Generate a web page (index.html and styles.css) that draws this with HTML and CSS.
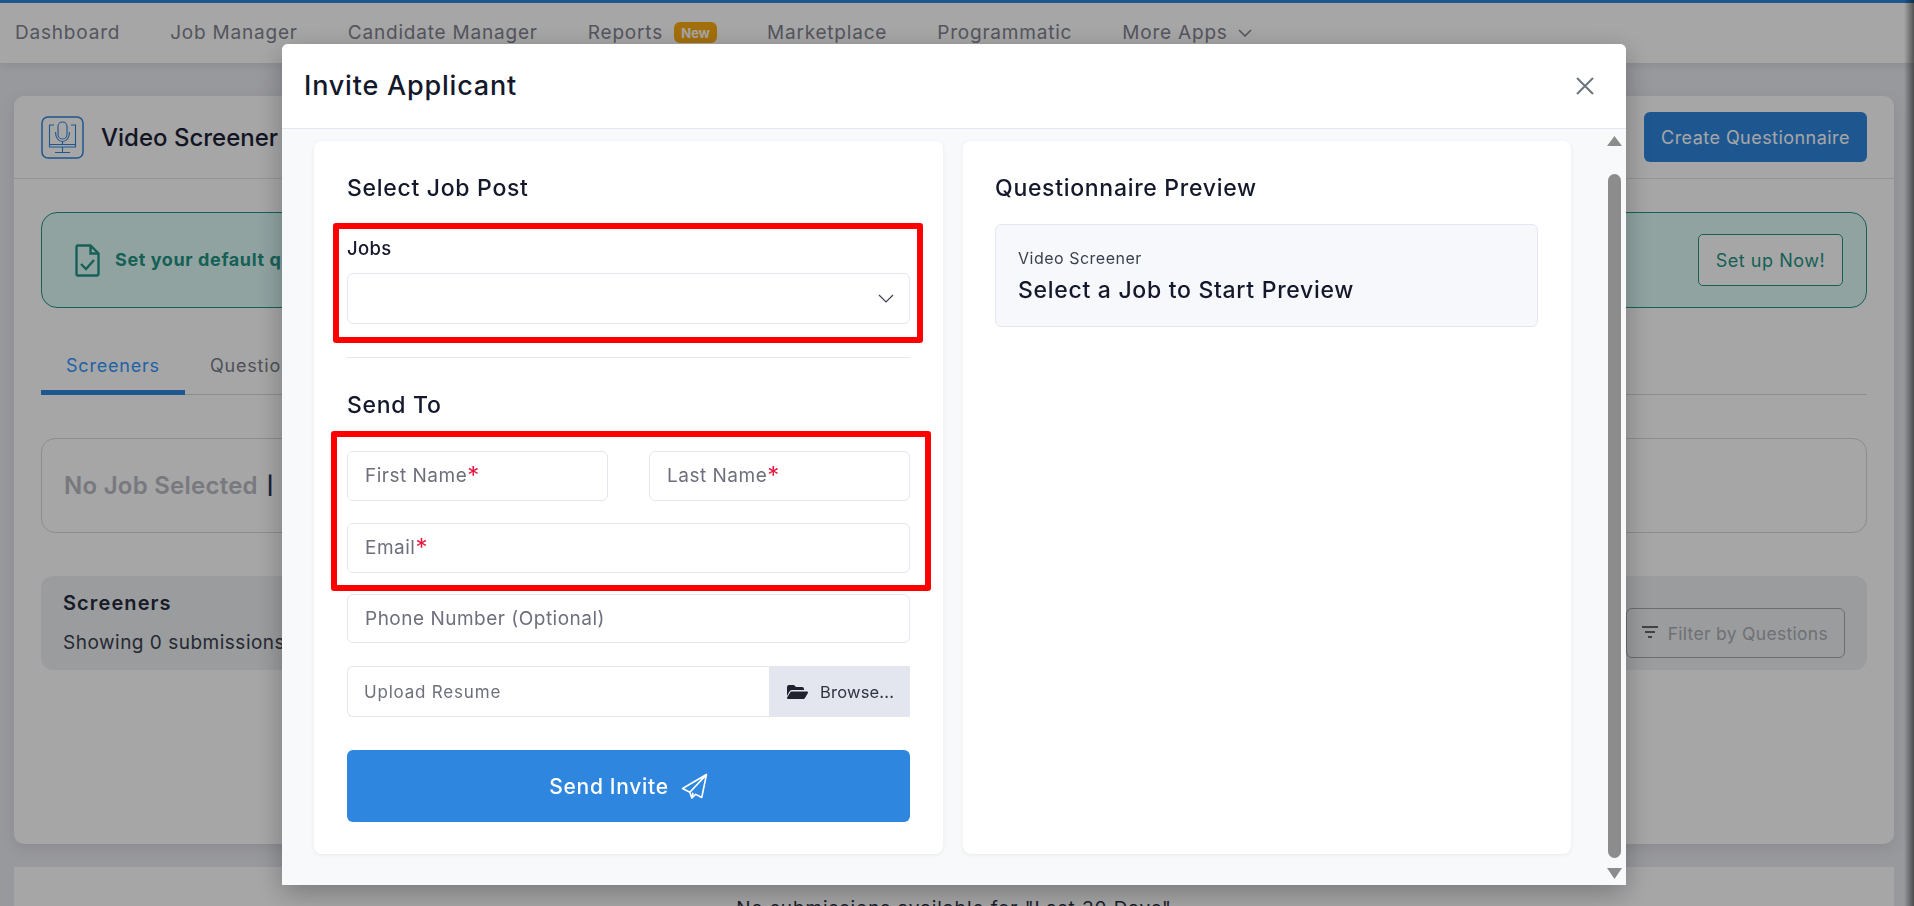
FILE: index.html
```html
<!DOCTYPE html>
<html lang="en">
<head>
<meta charset="utf-8">
<title>Invite Applicant</title>
<link rel="stylesheet" href="styles.css">
</head>
<body>
<div class="page">
  <nav class="nav">
    <a class="nav-item">Dashboard</a>
    <a class="nav-item">Job Manager</a>
    <a class="nav-item">Candidate Manager</a>
    <a class="nav-item nav-reports">Reports <span class="badge">New</span></a>
    <a class="nav-item">Marketplace</a>
    <a class="nav-item">Programmatic</a>
    <a class="nav-item nav-more">More Apps
      <svg class="nav-chevron" viewBox="0 0 14 8"><path d="M1 1l6 6 6-6"/></svg>
    </a>
  </nav>
  <main class="main">
    <section class="card">
      <header class="card-head">
        <svg class="vs-icon" viewBox="0 0 43 43">
          <rect x="1" y="1" width="41" height="41" rx="6" class="vs-box"/>
          <path class="vs-line" d="M13 9H8.500v22h26V9H30M8.500 28.500h26M21.500 31v5M14 36.500h15"/>
          <rect class="vs-line" x="17" y="6" width="9" height="17" rx="4.500"/>
          <path class="vs-line" d="M14.500 16c0 6 3 9.500 7 9.500s7-3.500 7-9.500M21.500 25.500V28"/>
        </svg>
        <h1 class="card-title">Video Screener</h1>
        <button class="btn-create">Create Questionnaire</button>
      </header>
      <div class="card-body">
        <div class="banner">
          <svg class="banner-icon" viewBox="0 0 25 33">
            <path class="banner-stroke" d="M2.500 1.500h13l8 8v20a2 2 0 0 1-2 2h-19a1.500 1.500 0 0 1-1-1.500V3a1.500 1.500 0 0 1 1-1.500zM15.500 1.500v8h8"/>
            <path class="banner-stroke" d="M6 20l5 5 8-9"/>
          </svg>
          <span class="banner-text">Set your default questionnaire for every new job post</span>
          <button class="btn-setup">Set up Now!</button>
        </div>
        <div class="tabs">
          <a class="tab tab-active">Screeners</a>
          <a class="tab">Questionnaires</a>
        </div>
        <div class="nojob"><span class="nojob-title">No Job Selected</span><span class="nojob-sep">|</span></div>
        <div class="panel">
          <div class="panel-text">
            <div class="panel-title">Screeners</div>
            <div class="panel-sub">Showing 0 submissions</div>
          </div>
          <button class="btn-filter">
            <svg class="filter-icon" viewBox="0 0 16 16"><path d="M0 2h16M3 7h10M6 12h4"/></svg>
            Filter by Questions
          </button>
        </div>
      </div>
    </section>
    <section class="empty">No submissions available for "Last 30 Days"</section>
  </main>
</div>
<div class="overlay"></div>
<div class="edge"></div>

<div class="modal">
  <header class="modal-head">
    <h2 class="modal-title">Invite Applicant</h2>
    <svg class="close" viewBox="0 0 18 18"><path d="M1 1l16 16M17 1L1 17"/></svg>
  </header>
  <div class="modal-body">
    <section class="m-card m-left">
      <h3 class="m-heading">Select Job Post</h3>
      <label class="jobs-label">Jobs</label>
      <div class="field select">
        <svg class="select-chevron" viewBox="0 0 16 9"><path d="M1 1l7 7 7-7"/></svg>
      </div>
      <hr class="divider">
      <h3 class="m-heading send-to">Send To</h3>
      <div class="name-row">
        <div class="field">First Name<span class="req">*</span></div>
        <div class="field">Last Name<span class="req">*</span></div>
      </div>
      <div class="field f-email">Email<span class="req">*</span></div>
      <div class="field f-phone">Phone Number (Optional)</div>
      <div class="upload">
        <span class="upload-text">Upload Resume</span>
        <span class="browse">
          <svg class="folder" viewBox="0 0 21 14"><path d="M0 2a2 2 0 0 1 2-2h5l2 2h6a2 2 0 0 1 2 2v1H5a3 3 0 0 0-2.700 1.700L0 11z"/><path d="M5 6.500h15a1 1 0 0 1 .9 1.400L18 13a2 2 0 0 1-1.800 1H1a1 1 0 0 1-.9-1.400L3 7.700a2 2 0 0 1 2-1.200z"/></svg>
          Browse...
        </span>
      </div>
      <button class="btn-send">Send Invite
        <svg class="plane" viewBox="0 0 26 26"><path d="M24.500 1.500L1.500 15l7 3.500 2 5.500 3.500-3.500 6 3zM24.500 1.500L8.500 18.500M10.500 24l1-5"/></svg>
      </button>
      <div class="mark mark-jobs"></div>
      <div class="mark mark-names"></div>
    </section>
    <section class="m-card m-right">
      <h3 class="m-heading">Questionnaire Preview</h3>
      <div class="preview">
        <div class="preview-label">Video Screener</div>
        <div class="preview-title">Select a Job to Start Preview</div>
      </div>
    </section>
    <div class="scroll">
      <svg class="arrow arrow-up" viewBox="0 0 15 10"><path d="M7.500 0L15 10H0z"/></svg>
      <div class="thumb"></div>
      <svg class="arrow arrow-down" viewBox="0 0 15 11"><path d="M0 0h15L7.500 11z"/></svg>
    </div>
  </div>
</div>
</body>
</html>
```

FILE: styles.css
```css
* { box-sizing: border-box; }
html, body { margin: 0; height: 906px; overflow: hidden; }
body {
  font-family: Inter, "Open Sans", "Liberation Sans", sans-serif;
  background: #eaebf1;
  color: #1c2238;
}
button { font-family: inherit; }

.page { height: 906px; display: flex; flex-direction: column; }

/* Top navigation */
.nav {
  height: 63px;
  flex: none;
  display: flex;
  align-items: center;
  gap: 50px;
  padding: 0 15px 1px;
  background: #fff;
  border-top: 3px solid #2e86de;
  box-shadow: 0 2px 8px rgba(60, 60, 90, .12);
}
.nav-item { font-size: 19px; letter-spacing: .8px; color: #828391; white-space: nowrap; display: flex; align-items: center; }
.nav-reports { gap: 11px; }
.nav-more { gap: 10px; }
.badge {
  height: 21px;
  width: 43px;
  border-radius: 6px;
  background: #fbab10;
  color: #fff;
  font-size: 13px;
  font-weight: 700;
  letter-spacing: 0;
  display: flex;
  align-items: center;
  justify-content: center;
}
.nav-chevron { width: 14px; height: 8px; fill: none; stroke: #828391; stroke-width: 1.6; }

/* Page body */
.main { flex: 1; padding: 33px 20px 0 14px; overflow: hidden; }
.card {
  height: 748px;
  background: #fff;
  border-radius: 10px;
  box-shadow: 0 4px 14px rgba(60, 60, 90, .12);
}
.card-head {
  height: 83px;
  border-bottom: 1px solid #e5e5e5;
  display: flex;
  align-items: center;
  padding: 0 27px;
}
.vs-icon { width: 43px; height: 43px; flex: none; margin-right: 17px; }
.vs-box { fill: none; stroke: #2e86de; stroke-width: 1.5; }
.vs-line { fill: none; stroke: #2e86de; stroke-width: 1.1; }
.card-title { margin: 0; font-size: 24px; font-weight: 500; color: #1c2238; }
.btn-create {
  margin-left: auto;
  width: 223px;
  height: 50px;
  border: 0;
  border-radius: 6px;
  background: #2e86de;
  color: #fff;
  font-size: 18px;
  letter-spacing: .45px;
}
.card-body { padding: 33px 27px 0; }

.banner {
  height: 96px;
  display: flex;
  align-items: center;
  padding: 0 23px 0 33px;
  background: #ddfbf8;
  border: 1px solid #239484;
  border-radius: 16px;
}
.banner-icon { width: 25px; height: 33px; flex: none; margin-right: 15px; }
.banner-stroke { fill: none; stroke: #239484; stroke-width: 2.400; }
.banner-text { font-size: 18px; font-weight: 700; letter-spacing: .6px; color: #239484; padding-bottom: 1px; }
.btn-setup {
  margin-left: auto;
  width: 145px;
  height: 52px;
  background: #fff;
  border: 1px solid #239484;
  border-radius: 5px;
  color: #239484;
  font-size: 18px;
  letter-spacing: .55px;
}

.tabs { margin-top: 37px; height: 50px; display: flex; border-bottom: 1px solid #d8d8d8; }
.tab {
  width: 144px;
  height: 50px;
  padding: 0 25px 10px;
  display: flex;
  align-items: center;
  font-size: 18px;
  letter-spacing: .8px;
  color: #7a7d86;
  white-space: nowrap;
}
.tab-active { color: #2f97ff; border-bottom: 5px solid #2e86de; padding-bottom: 5px; }

.nojob {
  margin-top: 43px;
  height: 95px;
  border: 1px solid #d8d8d8;
  border-radius: 14px;
  display: flex;
  align-items: center;
  padding-left: 22px;
  gap: 9px;
}
.nojob-title { font-size: 24px; font-weight: 600; letter-spacing: .25px; color: #b9bac4; }
.nojob-sep { font-size: 18px; font-weight: 700; color: #2a3358; }

.panel {
  margin-top: 43px;
  height: 94px;
  background: #eef0f3;
  border-radius: 12px;
  display: flex;
  justify-content: space-between;
  padding: 15px 22px 12px;
  align-items: flex-end;
}
.panel-text { align-self: flex-start; }
.panel-title { font-size: 20px; font-weight: 600; letter-spacing: 1.100px; color: #252b3c; line-height: 24px; }
.panel-sub { font-size: 19px; letter-spacing: .5px; color: #3a3f4e; margin-top: 16px; line-height: 24px; }
.btn-filter {
  width: 219px;
  height: 50px;
  display: flex;
  align-items: center;
  justify-content: flex-end;
  gap: 10px;
  padding: 0 16px 0 0;
  background: transparent;
  border: 1px solid #a6a8af;
  border-radius: 6px;
  color: #abadb3;
  font-size: 17.500px;
  letter-spacing: .3px;
}
.filter-icon { width: 16px; height: 16px; fill: none; stroke: #666; stroke-width: 2; }

.empty {
  margin-top: 23px;
  height: 120px;
  padding-top: 30px;
  background: #fff;
  text-align: center;
  font-size: 19px;
  letter-spacing: .9px;
  color: #2a2f40;
}

/* Dim layer over the page */
.overlay { position: fixed; inset: 0; background: rgba(0, 0, 0, .35); }
.edge {
  position: fixed;
  top: 0;
  right: 0;
  bottom: 0;
  width: 10px;
  background: linear-gradient(to right, rgba(0, 0, 0, 0), rgba(0, 0, 0, .5));
}

/* Modal */
.modal {
  position: fixed;
  left: 282px;
  top: 44px;
  width: 1344px;
  height: 841px;
  display: flex;
  flex-direction: column;
  background: #f8f9fb;
  border-radius: 6px 6px 0 0;
  box-shadow: 0 8px 28px rgba(0, 0, 0, .28);
}
.modal-head {
  height: 85px;
  flex: none;
  display: flex;
  align-items: center;
  justify-content: space-between;
  padding: 0 32px 0 22px;
  background: #fff;
  border-radius: 6px 6px 0 0;
  border-bottom: 1px solid #e6e6f2;
}
.modal-title { margin: 0 0 2px; font-size: 27px; font-weight: 500; color: #14182b; letter-spacing: .8px; }
.close { width: 18px; height: 18px; fill: none; stroke: #6c757d; stroke-width: 2; }

.modal-body { flex: 1; display: flex; padding: 12px 4px 0 32px; }
.m-card {
  height: 713px;
  background: #fff;
  border-radius: 8px;
  box-shadow: 0 1px 4px rgba(60, 60, 90, .08);
  flex: none;
}
.m-left { position: relative; width: 629px; padding: 32px 33px 0 33px; }
.m-right { width: 608px; margin-left: 20px; padding: 32px 33px 0 32px; }
.m-heading { margin: 0; font-size: 23px; line-height: 30px; font-weight: 500; letter-spacing: .7px; color: #14182b; }
.jobs-label { display: block; margin-top: 33px; font-size: 18.500px; line-height: 24px; font-weight: 500; letter-spacing: .3px; color: #14182b; }
.field {
  height: 50px;
  border: 1px solid #e6e6f2;
  border-radius: 6px;
  background: #fff;
  padding: 0 0 1px 17px;
  display: flex;
  align-items: center;
  font-size: 19px;
  letter-spacing: .5px;
  color: #6d707c;
}
.select { position: relative; height: 51px; margin-top: 13px; justify-content: flex-end; padding: 0 15px 0 0; }
.select-chevron { width: 16px; height: 9px; fill: none; stroke: #3c4152; stroke-width: 1.200; }
.divider { margin: 33px 0 0; border: 0; border-top: 1px solid #e6e6f2; }
.send-to { margin-top: 32px; }
.name-row { margin-top: 31px; display: grid; grid-template-columns: 1fr 1fr; gap: 41px; }
.req { color: #e5173f; font-size: 24px; font-weight: 400; line-height: 18px; letter-spacing: 0; }
.f-email { margin-top: 22px; }
.f-phone { margin-top: 21px; height: 49px; }
.upload {
  margin-top: 23px;
  height: 51px;
  display: flex;
  border: 1px solid #e6e6f2;
  border-right: 0;
  border-radius: 6px 0 0 6px;
  overflow: hidden;
}
.upload-text { flex: 1; display: flex; align-items: center; padding-left: 16px; font-size: 17px; letter-spacing: .8px; color: #6d707c; }
.browse {
  width: 141px;
  display: flex;
  align-items: center;
  gap: 12px;
  padding-left: 18px;
  background: #e3e6ef;
  font-size: 16.500px;
  letter-spacing: .2px;
  color: #2e3340;
}
.folder { width: 21px; height: 14px; fill: #1f2330; }
.btn-send {
  margin-top: 33px;
  width: 100%;
  height: 72px;
  border: 0;
  border-radius: 6px;
  background: #2e86de;
  color: #fff;
  font-size: 21px;
  font-weight: 500;
  letter-spacing: .7px;
  display: flex;
  align-items: center;
  justify-content: center;
  gap: 12px;
}
.plane { width: 27px; height: 27px; fill: none; stroke: #fff; stroke-width: 1.600; stroke-linejoin: round; }

/* Red annotation boxes drawn over the form */
.mark { position: absolute; border: 6px solid #f00; border-radius: 3px; pointer-events: none; }
.mark-jobs { left: 19px; top: 82px; width: 590px; height: 120px; }
.mark-names { left: 17px; top: 290px; width: 600px; height: 160px; }

.preview {
  margin-top: 21px;
  height: 103px;
  padding: 22px 22px 0;
  background: #f7f8fb;
  border: 1px solid #e6e6f2;
  border-radius: 6px;
}
.preview-label { font-size: 16px; line-height: 22px; letter-spacing: .5px; color: #3a3f4e; }
.preview-title { margin-top: 6px; font-size: 23px; line-height: 30px; font-weight: 500; letter-spacing: .7px; color: #14182b; }

/* Modal scrollbar */
.scroll { width: 15px; margin-left: auto; display: flex; flex-direction: column; padding: 7px 0 6px; margin-top: -12px; }
.arrow { width: 15px; fill: #8c8c8c; flex: none; }
.arrow-up { height: 10px; }
.arrow-down { height: 11px; }
.thumb { flex: 1; margin: 28px 1px 10px; background: #8c8c8c; border-radius: 7px; }
```
